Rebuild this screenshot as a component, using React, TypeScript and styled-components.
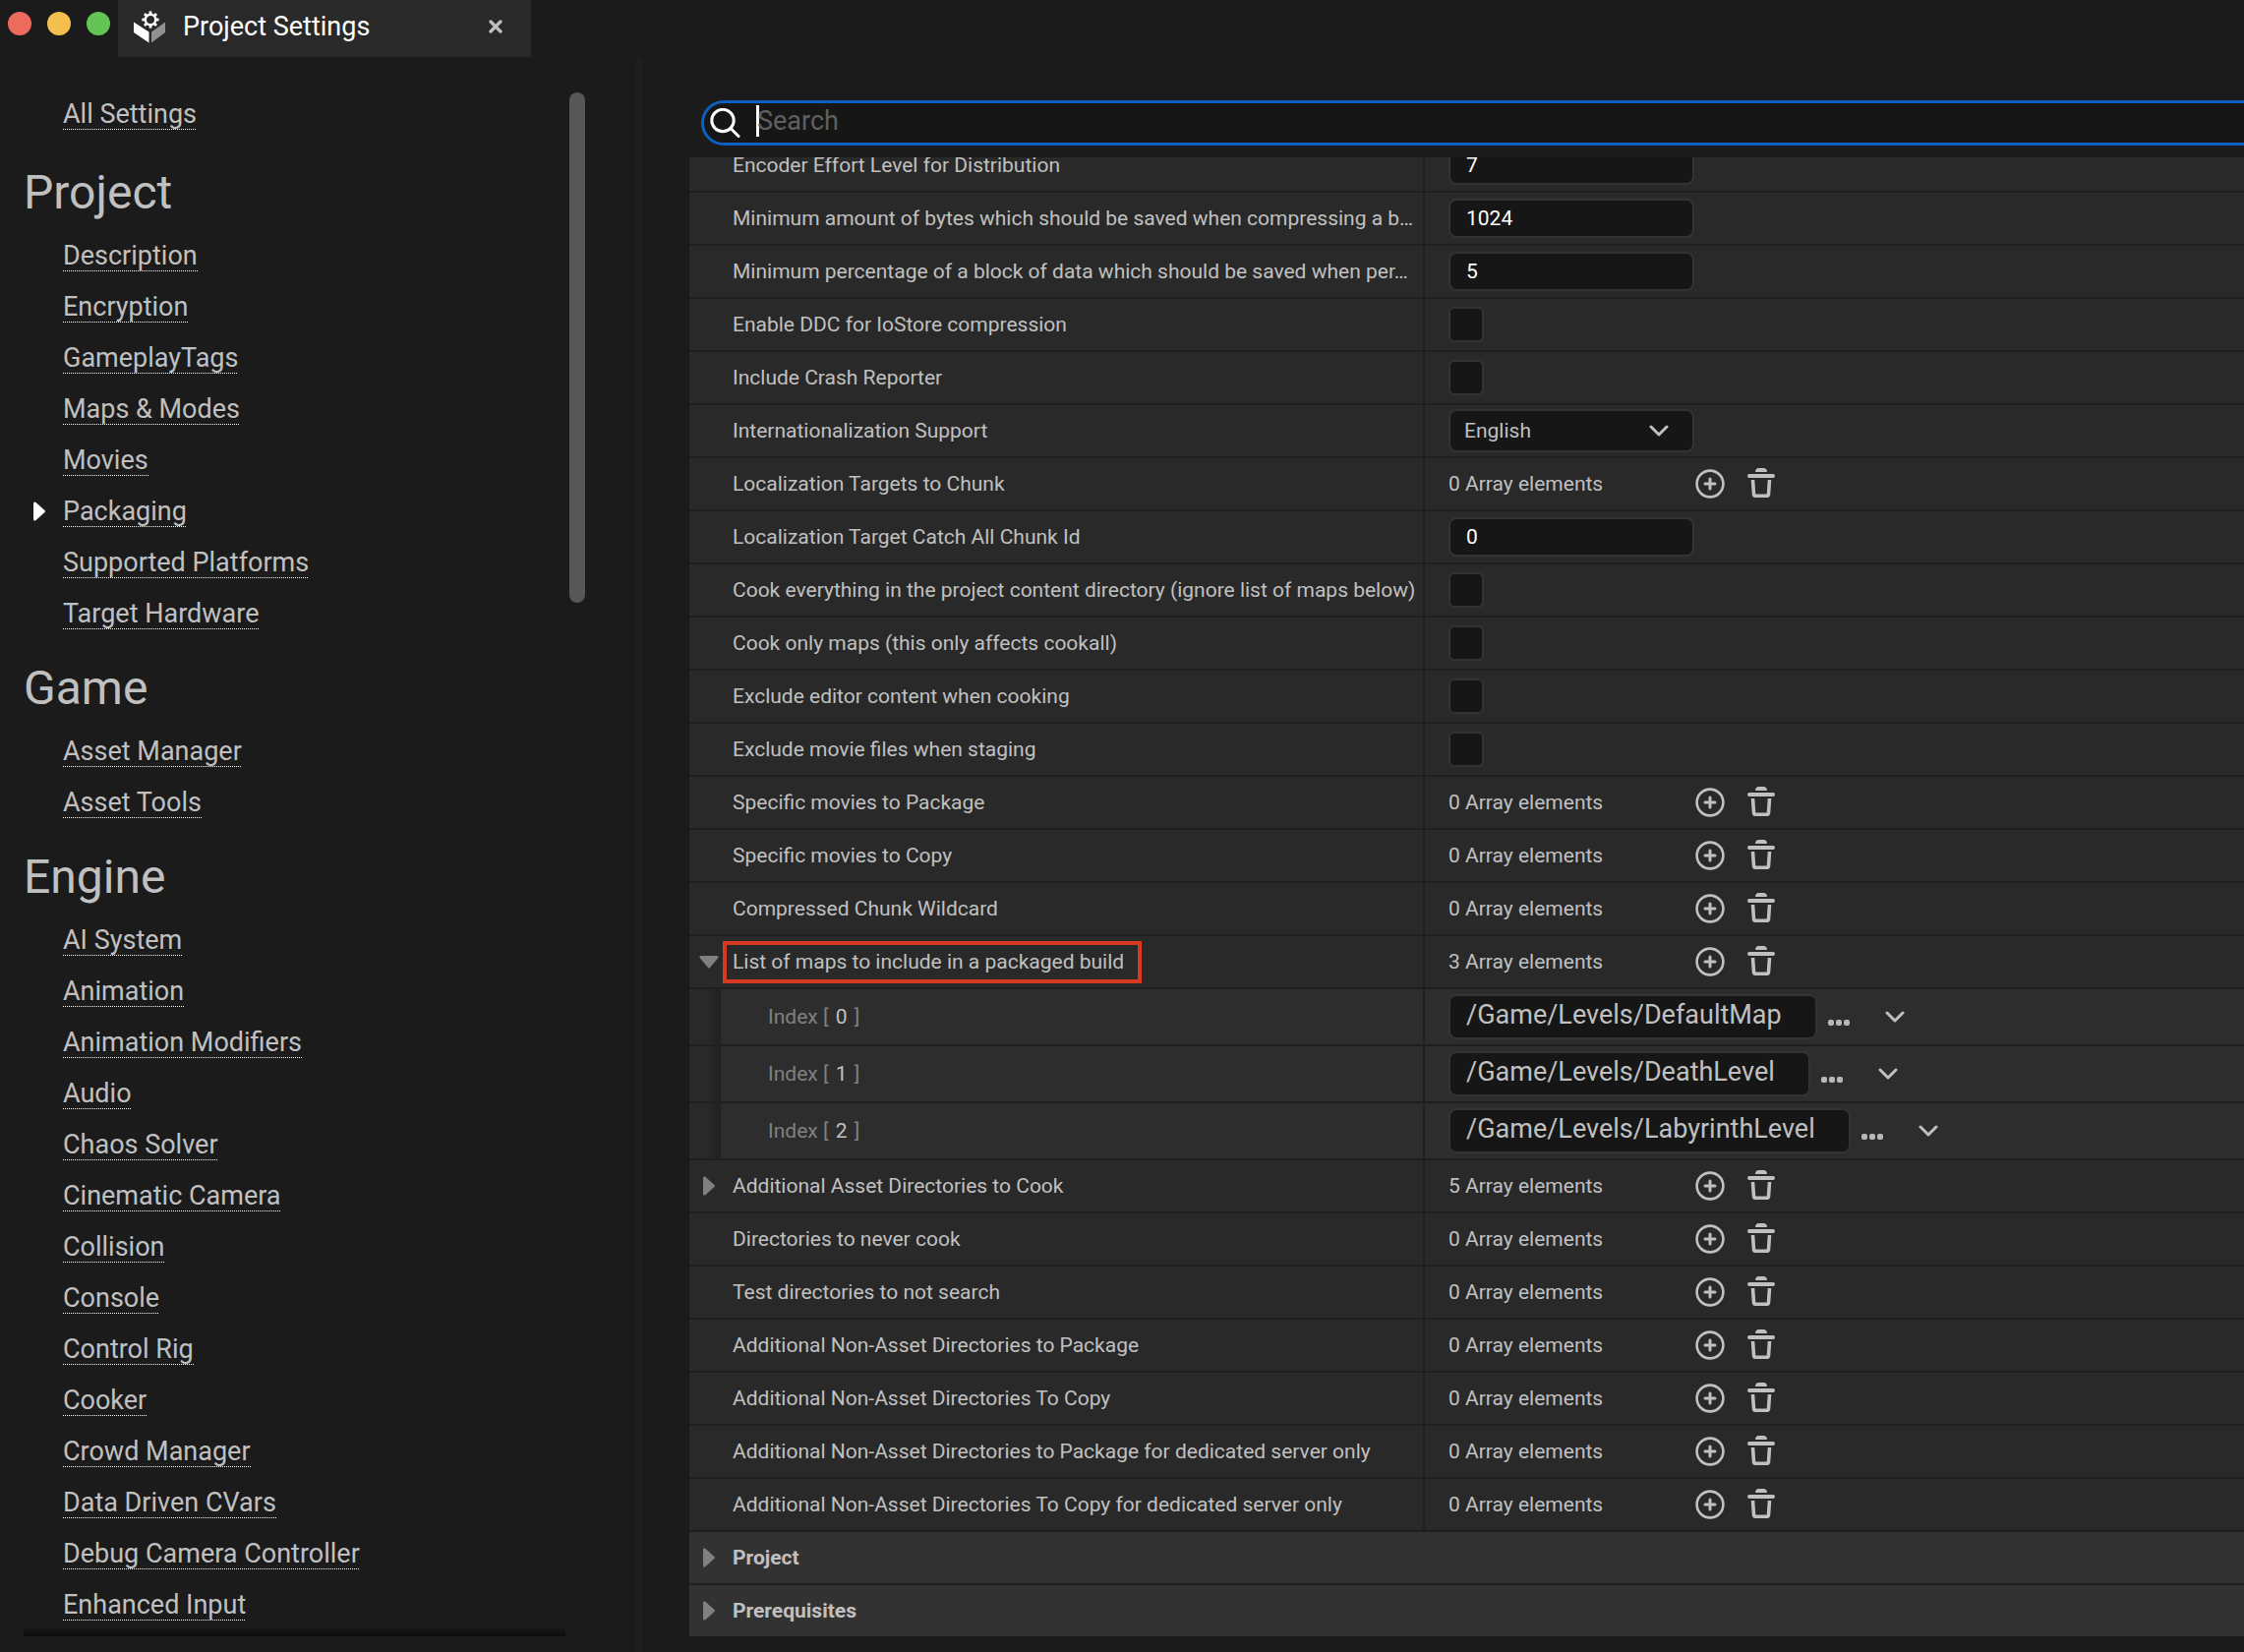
import React from "react";
import styled, { createGlobalStyle, css } from "styled-components";

const Global = createGlobalStyle`
  *, *::before, *::after { box-sizing: border-box; }
  html { background: #1b1b1b; }
  body {
    margin: 0;
    background: #1b1b1b;
    color: #c0c0c0;
    font-family: Roboto, "Liberation Sans", sans-serif;
  }
  button, input, select { font: inherit; color: inherit; margin: 0; }
  button { padding: 0; border: 0; background: none; display: flex; align-items: center; justify-content: center; }
`;

const Window = styled.div`
  height: 100vh;
  display: flex;
  flex-direction: column;
  overflow: hidden;
`;

const TitleBar = styled.header`
  flex: none;
  height: 58px;
  display: flex;
`;

const Lights = styled.div`
  width: 120px;
  height: 48px;
  padding-left: 8px;
  display: flex;
  align-items: center;
  gap: 16px;
`;

const Light = styled.button<{ $color: string }>`
  width: 24px;
  height: 24px;
  border-radius: 50%;
  background: ${(p) => p.$color};
`;

const Tab = styled.div`
  width: 420px;
  background: #292929;
  color: #fff;
  font-size: 27px;
  line-height: 32px;
  display: flex;
  align-items: center;
  gap: 17px;
  padding: 0 29px 4px 16px;
`;

const TabTitle = styled.span`
  flex: 1;
  white-space: nowrap;
`;

const Body = styled.div`
  flex: 1;
  min-height: 0;
  display: flex;
`;

const Sidebar = styled.aside`
  flex: none;
  width: 647px;
  padding: 36px 52px 16px 24px;
  display: flex;
  justify-content: space-between;
`;

const Nav = styled.nav`
  width: 551px;
  overflow: hidden;
  display: flex;
  flex-direction: column;
  position: relative;
  &::after {
    content: "";
    position: absolute;
    left: 0;
    right: 0;
    bottom: 0;
    height: 10px;
    background: linear-gradient(to bottom, rgba(0, 0, 0, 0), rgba(0, 0, 0, 0.55));
  }
`;

const NavGroup = styled.section`
  flex: none;
  display: flex;
  flex-direction: column;
`;

const AllSettings = styled.div`
  flex: none;
  display: flex;
  margin-bottom: 4px;
`;

const NavHeading = styled.h2`
  margin: 0;
  padding: 18px 0 14px;
  font-size: 48px;
  line-height: 56px;
  font-weight: 400;
`;

const NavList = styled.ul`
  list-style: none;
  margin: 0;
  padding: 0;
`;

const NavItem = styled.li`
  display: flex;
`;

const Marker = styled.span`
  width: 40px;
  height: 44px;
  padding-left: 9px;
  display: flex;
  align-items: center;
`;

const NavLink = styled.a`
  margin: 6px 0 14px;
  height: 32px;
  font-size: 27px;
  line-height: 32px;
  color: #c0c0c0;
  text-decoration: none;
  white-space: nowrap;
  background: repeating-linear-gradient(to right, #fff 0 1px, transparent 1px 2px) left bottom / 100% 1px no-repeat;
`;

const ScrollThumb = styled.div`
  width: 16px;
  height: 519px;
  border-radius: 8px;
  background: #575757;
`;

const Divider = styled.div`
  flex: none;
  width: 6px;
  background: #1f1f1f;
`;

const Main = styled.main`
  flex: 1;
  min-width: 0;
  padding: 44px 0 16px 48px;
  display: flex;
  flex-direction: column;
  gap: 12px;
`;

const SearchBox = styled.label`
  flex: none;
  margin: 0 -24px 0 12px;
  height: 46px;
  border: 3px solid #0d60bf;
  border-radius: 23px;
  background: #161616;
  display: flex;
  align-items: center;
  padding-left: 6px;
`;

const Caret = styled.span`
  width: 3px;
  height: 32px;
  margin: 0 -2px 4px 16px;
  background: #fff;
`;

const SearchInput = styled.input`
  flex: 1;
  min-width: 0;
  height: 32px;
  margin-bottom: 4px;
  padding: 0;
  border: 0;
  outline: 0;
  background: none;
  font-size: 27px;
  &::placeholder { color: #606060; opacity: 1; }
`;

const Viewport = styled.div`
  flex: 1;
  min-height: 0;
  overflow: hidden;
  display: flex;
  flex-direction: column;
  justify-content: flex-end;
`;

const Row = styled.div<{ $nested?: boolean; $category?: boolean }>`
  flex: none;
  display: flex;
  height: ${(p) => (p.$nested ? 58 : 54)}px;
  border-bottom: 2px solid #1f1f1f;
  background: ${(p) => (p.$category ? "#323232" : p.$nested ? "#2d2d2d" : "#292929")};
  font-size: 21px;
  line-height: 26px;
  white-space: nowrap;
  &:last-child { height: 52px; border-bottom: 0; }
`;

const NameCell = styled.div`
  flex: none;
  width: 748px;
  border-right: 2px solid #1f1f1f;
  display: flex;
  align-items: center;
`;

const Toggle = styled.button`
  flex: none;
  width: 40px;
  height: 100%;
`;

const Gutter = styled.span`
  flex: none;
  width: 40px;
`;

const Indent = styled.span`
  flex: none;
  width: 32px;
  height: 100%;
  margin-right: 48px;
  background: linear-gradient(to right, #292929 18px, #202020 32px);
`;

const Name = styled.label<{ $marked?: boolean }>`
  color: #c0c0c0;
  ${(p) =>
    p.$marked
      ? css`
          margin-left: -6px;
          padding: 4px 14px 5px 6px;
          border: 4px solid #d53a20;
        `
      : css`
          margin-left: 4px;
        `}
`;

const CategoryName = styled.h3`
  margin: 0 0 0 4px;
  align-self: center;
  font-size: 21px;
  line-height: 26px;
  font-weight: 700;
`;

const IndexLabel = styled.label`
  color: #808080;
`;

const Digit = styled.span`
  padding: 0 2px;
  color: #c0c0c0;
`;

const ValueCell = styled.div`
  flex: 1;
  display: flex;
  align-items: center;
  padding-left: 24px;
`;

const fieldBox = css`
  border: 2px solid #333;
  border-radius: 8px;
  background: #161616;
  outline: 0;
`;

const NumberField = styled.input`
  ${fieldBox}
  width: 250px;
  height: 40px;
  padding: 0 16px;
  color: #fff;
`;

const Check = styled.input`
  ${fieldBox}
  appearance: none;
  width: 36px;
  height: 36px;
  border-radius: 6px;
`;

const SelectWrap = styled.div`
  width: 250px;
  display: grid;
  align-items: center;
  & > * { grid-area: 1 / 1; }
  & > svg { justify-self: end; margin-right: 26px; pointer-events: none; }
`;

const Select = styled.select`
  ${fieldBox}
  appearance: none;
  width: 100%;
  height: 44px;
  padding: 0 14px;
`;

const Count = styled.span`
  width: 251px;
`;

const IconButtons = styled.div`
  display: flex;
  align-items: center;
  gap: 23px;
`;

const PathField = styled.input`
  ${fieldBox}
  field-sizing: content;
  height: 46px;
  padding: 0 34px 4px 16px;
  font-size: 27px;
`;

const Browse = styled.button`
  width: 24px;
  height: 46px;
  margin: 0 35px 0 10px;
`;

const ChevronDown = () => (
  <svg width="20" height="12" viewBox="0 0 20 12" fill="none" stroke="#c0c0c0" strokeWidth="3" strokeLinecap="round" strokeLinejoin="round">
    <path d="M2 2 L10 10 L18 2" />
  </svg>
);

const PlusIcon = () => (
  <svg width="30" height="30" viewBox="0 0 30 30" fill="none" stroke="#c0c0c0" strokeWidth="3" strokeLinecap="round">
    <circle cx="15" cy="15" r="13.4" strokeWidth="2.6" />
    <path d="M15 10v10M10 15h10" />
  </svg>
);

const TrashIcon = () => (
  <svg width="28" height="32" viewBox="0 0 28 32" fill="none">
    <path d="M8 4C8 1.500 9.500 0 11.500 0h5c2 0 3.500 1.500 3.500 4z" fill="#c0c0c0" />
    <rect x="0" y="6" width="28" height="4" rx="2" fill="#c0c0c0" />
    <path d="M5.500 12 L6.500 26.500 Q6.700 28.300 8.500 28.300 H19.500 Q21.300 28.300 21.500 26.500 L22.500 12" stroke="#c0c0c0" strokeWidth="3.600" />
  </svg>
);

const DotsIcon = () => (
  <svg width="24" height="46" viewBox="0 0 24 46" fill="#b8b8b8">
    <rect x="1" y="26" width="6" height="6" rx="2" />
    <rect x="9" y="26" width="6" height="6" rx="2" />
    <rect x="17" y="26" width="6" height="6" rx="2" />
  </svg>
);

const ArrowRight = ({ color = "#808080" }: { color?: string }) => (
  <svg width="14" height="20" viewBox="0 0 14 20" fill={color}>
    <path d="M1 2Q1 0 3 0.600L12.500 9Q13.500 10 12.500 11L3 19.400Q1 20 1 18z" />
  </svg>
);

const ArrowDown = () => (
  <svg width="20" height="13" viewBox="0 0 20 13" fill="#808080">
    <path d="M1.500 0H18.500Q20.500 0.500 19 2.500L11 12Q10 13 9 12L1 2.500Q-0.500 0.500 1.500 0z" />
  </svg>
);

const SearchIcon = () => (
  <svg width="31" height="31" viewBox="0 0 31 31" fill="none" stroke="#fff" strokeWidth="3" strokeLinecap="round">
    <circle cx="13" cy="12.500" r="11.200" />
    <path d="M21 20.500 L29 28.500" />
  </svg>
);

const CloseIcon = () => (
  <svg width="14" height="16" viewBox="0 0 14 16" stroke="#c0c0c0" strokeWidth="3.200" strokeLinecap="round">
    <path d="M2 3 L12 13 M12 3 L2 13" />
  </svg>
);

const BoxGearIcon = () => (
  <svg width="33" height="33" viewBox="0 0 33 33">
    <path d="M0 11.500 L15.500 21.500 V32.500 L0 22z" fill="#fff" />
    <path d="M32 11.500 L18 21.500 V32.500 L32 22z" fill="#909090" />
    <circle cx="17" cy="9" r="5.200" fill="none" stroke="#fff" strokeWidth="2.400" />
    <g stroke="#fff" strokeWidth="2.800">
      {[0, 45, 90, 135, 180, 225, 270, 315].map((a) => (
        <path key={a} d="M17 3.600V0.400" transform={`rotate(${a} 17 9)`} />
      ))}
    </g>
  </svg>
);

const groups = [
  {
    title: "Project",
    items: ["Description", "Encryption", "GameplayTags", "Maps & Modes", "Movies", "Packaging", "Supported Platforms", "Target Hardware"],
  },
  { title: "Game", items: ["Asset Manager", "Asset Tools"] },
  {
    title: "Engine",
    items: ["AI System", "Animation", "Animation Modifiers", "Audio", "Chaos Solver", "Cinematic Camera", "Collision", "Console", "Control Rig", "Cooker", "Crowd Manager", "Data Driven CVars", "Debug Camera Controller", "Enhanced Input"],
  },
];

type Setting = {
  name: string;
  kind: "number" | "check" | "select" | "array" | "path" | "category";
  value?: string;
  open?: boolean;
  expandable?: boolean;
  marked?: boolean;
};

const settings: Setting[] = [
  { name: "Encoder Effort Level for Distribution", kind: "number", value: "7" },
  { name: "Minimum amount of bytes which should be saved when compressing a b…", kind: "number", value: "1024" },
  { name: "Minimum percentage of a block of data which should be saved when per…", kind: "number", value: "5" },
  { name: "Enable DDC for IoStore compression", kind: "check" },
  { name: "Include Crash Reporter", kind: "check" },
  { name: "Internationalization Support", kind: "select", value: "English" },
  { name: "Localization Targets to Chunk", kind: "array", value: "0" },
  { name: "Localization Target Catch All Chunk Id", kind: "number", value: "0" },
  { name: "Cook everything in the project content directory (ignore list of maps below)", kind: "check" },
  { name: "Cook only maps (this only affects cookall)", kind: "check" },
  { name: "Exclude editor content when cooking", kind: "check" },
  { name: "Exclude movie files when staging", kind: "check" },
  { name: "Specific movies to Package", kind: "array", value: "0" },
  { name: "Specific movies to Copy", kind: "array", value: "0" },
  { name: "Compressed Chunk Wildcard", kind: "array", value: "0" },
  { name: "List of maps to include in a packaged build", kind: "array", value: "3", expandable: true, open: true, marked: true },
  { name: "0", kind: "path", value: "/Game/Levels/DefaultMap" },
  { name: "1", kind: "path", value: "/Game/Levels/DeathLevel" },
  { name: "2", kind: "path", value: "/Game/Levels/LabyrinthLevel" },
  { name: "Additional Asset Directories to Cook", kind: "array", value: "5", expandable: true },
  { name: "Directories to never cook", kind: "array", value: "0" },
  { name: "Test directories to not search", kind: "array", value: "0" },
  { name: "Additional Non-Asset Directories to Package", kind: "array", value: "0" },
  { name: "Additional Non-Asset Directories To Copy", kind: "array", value: "0" },
  { name: "Additional Non-Asset Directories to Package for dedicated server only", kind: "array", value: "0" },
  { name: "Additional Non-Asset Directories To Copy for dedicated server only", kind: "array", value: "0" },
  { name: "Project", kind: "category", expandable: true },
  { name: "Prerequisites", kind: "category", expandable: true },
];

function Value({ s, id }: { s: Setting; id: string }) {
  switch (s.kind) {
    case "number":
      return <NumberField id={id} defaultValue={s.value} />;
    case "check":
      return <Check id={id} type="checkbox" />;
    case "select":
      return (
        <SelectWrap>
          <Select id={id} defaultValue={s.value}>
            <option>{s.value}</option>
          </Select>
          <ChevronDown />
        </SelectWrap>
      );
    case "path":
      return (
        <>
          <PathField id={id} defaultValue={s.value} />
          <Browse type="button" aria-label="Browse"><DotsIcon /></Browse>
          <button type="button" aria-label="Element options"><ChevronDown /></button>
        </>
      );
    default:
      return (
        <>
          <Count>{s.value} Array elements</Count>
          <IconButtons>
            <button type="button" aria-label="Add element"><PlusIcon /></button>
            <button type="button" aria-label="Remove all elements"><TrashIcon /></button>
          </IconButtons>
        </>
      );
  }
}

function Expander({ s }: { s: Setting }) {
  if (!s.expandable) return <Gutter />;
  return (
    <Toggle type="button" aria-label={s.open ? "Collapse" : "Expand"} aria-expanded={!!s.open}>
      {s.open ? <ArrowDown /> : <ArrowRight />}
    </Toggle>
  );
}

function SettingRow({ s, id }: { s: Setting; id: string }) {
  if (s.kind === "category") {
    return (
      <Row $category>
        <Expander s={s} />
        <CategoryName>{s.name}</CategoryName>
      </Row>
    );
  }
  if (s.kind === "path") {
    return (
      <Row $nested>
        <NameCell>
          <Indent />
          <IndexLabel htmlFor={id}>
            Index [ <Digit>{s.name}</Digit> ]
          </IndexLabel>
        </NameCell>
        <ValueCell><Value s={s} id={id} /></ValueCell>
      </Row>
    );
  }
  return (
    <Row>
      <NameCell>
        <Expander s={s} />
        {s.kind === "array" ? (
          <Name as="span" $marked={s.marked}>{s.name}</Name>
        ) : (
          <Name htmlFor={id}>{s.name}</Name>
        )}
      </NameCell>
      <ValueCell><Value s={s} id={id} /></ValueCell>
    </Row>
  );
}

export default function App() {
  return (
    <Window>
      <Global />
      <TitleBar>
        <Lights>
          <Light type="button" aria-label="Close window" $color="#ed6a5e" />
          <Light type="button" aria-label="Minimize window" $color="#f5bf4f" />
          <Light type="button" aria-label="Zoom window" $color="#62c554" />
        </Lights>
        <Tab>
          <BoxGearIcon />
          <TabTitle>Project Settings</TabTitle>
          <button type="button" aria-label="Close tab"><CloseIcon /></button>
        </Tab>
      </TitleBar>
      <Body>
        <Sidebar>
          <Nav>
            <AllSettings>
              <Marker />
              <NavLink href="#all">All Settings</NavLink>
            </AllSettings>
            {groups.map((g) => (
              <NavGroup key={g.title}>
                <NavHeading>{g.title}</NavHeading>
                <NavList>
                  {g.items.map((item) => (
                    <NavItem key={item}>
                      <Marker>{item === "Packaging" && <ArrowRight color="#fff" />}</Marker>
                      <NavLink href={"#" + item}>{item}</NavLink>
                    </NavItem>
                  ))}
                </NavList>
              </NavGroup>
            ))}
          </Nav>
          <ScrollThumb />
        </Sidebar>
        <Divider />
        <Main>
          <SearchBox>
            <SearchIcon />
            <Caret />
            <SearchInput placeholder="Search" aria-label="Search" />
          </SearchBox>
          <Viewport>
            {settings.map((s, i) => (
              <SettingRow key={i} s={s} id={"setting-" + i} />
            ))}
          </Viewport>
        </Main>
      </Body>
    </Window>
  );
}
